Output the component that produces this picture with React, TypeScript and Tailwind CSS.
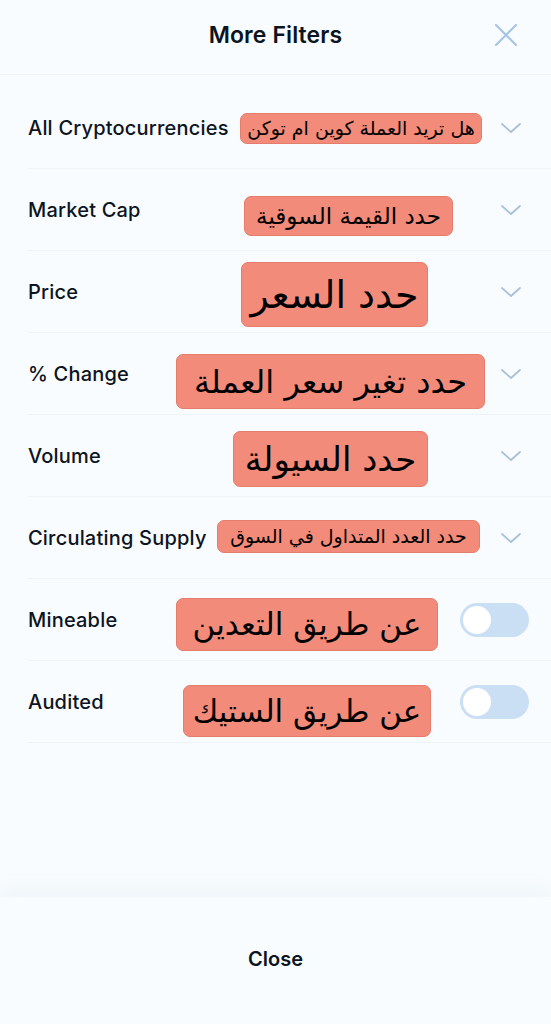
import React from "react";

type Row = {
  label: string;
  note: string;
  noteClass: string;
  toggle?: boolean;
};

const rows: Row[] = [
  {
    label: "All Cryptocurrencies",
    note: "هل تريد العملة كوين ام توكن",
    noteClass: "left-[212px] top-[26px] w-[242px] h-[31px] text-[19px]",
  },
  {
    label: "Market Cap",
    note: "حدد القيمة السوقية",
    noteClass: "left-[216px] top-[27px] w-[209px] h-[40px] text-[23px]",
  },
  {
    label: "Price",
    note: "حدد السعر",
    noteClass: "left-[213px] top-[11px] w-[187px] h-[65px] text-[38px]",
  },
  {
    label: "% Change",
    note: "حدد تغير سعر العملة",
    noteClass: "left-[148px] top-[21px] w-[309px] h-[55px] text-[32px]",
  },
  {
    label: "Volume",
    note: "حدد السيولة",
    noteClass: "left-[205px] top-[16px] w-[195px] h-[56px] text-[34px]",
  },
  {
    label: "Circulating Supply",
    note: "حدد العدد المتداول في السوق",
    noteClass: "left-[189px] top-[23px] w-[263px] h-[33px] text-[19px]",
  },
  {
    label: "Mineable",
    note: "عن طريق التعدين",
    noteClass: "left-[148px] top-[19px] w-[262px] h-[53px] text-[31px]",
    toggle: true,
  },
  {
    label: "Audited",
    note: "عن طريق الستيك",
    noteClass: "left-[155px] top-[24px] w-[248px] h-[52px] text-[31px]",
    toggle: true,
  },
];

function Chevron() {
  return (
    <svg width="22" height="12" viewBox="0 0 22 12" fill="none" className="mr-[7px]">
      <path
        d="M2 2l9 8 9-8"
        stroke="#a9c0d8"
        strokeWidth="1.8"
        strokeLinecap="round"
        strokeLinejoin="round"
      />
    </svg>
  );
}

function Toggle() {
  return (
    <div className="flex h-[34px] w-[69px] items-center rounded-full bg-[#cadff3] px-[3px]">
      <div className="h-[28px] w-[28px] rounded-full bg-white" />
    </div>
  );
}

export default function App() {
  return (
    <div
      className="flex h-[1024px] w-full flex-col bg-[#f8fcfe] text-[#0d1421]"
      style={{ fontFamily: "Inter, 'Noto Sans', sans-serif" }}
    >
      {/* Header */}
      <div className="grid h-[75px] grid-cols-[1fr_auto_1fr] items-center border-b border-[#eef4f7] pb-1">
        <div />
        <h1 className="text-[23px] font-semibold tracking-[0.1px]">More Filters</h1>
        <div className="flex justify-end pr-[33px]">
          <svg width="24" height="24" viewBox="0 0 24 24" fill="none">
            <path
              d="M2 2l20 20M22 2L2 22"
              stroke="#a7c4e4"
              strokeWidth="2.2"
              strokeLinecap="round"
            />
          </svg>
        </div>
      </div>

      {/* Filter list */}
      <div className="flex-1 pt-3">
        {rows.map((row) => (
          <div
            key={row.label}
            className="relative ml-7 flex h-[82px] items-center justify-between border-b border-[#eef3f6] pr-[22px]"
          >
            <span className="text-[20px] font-medium tracking-[0.2px]">{row.label}</span>
            {row.toggle ? <Toggle /> : <Chevron />}
            <div
              dir="rtl"
              className={`absolute flex items-center justify-center overflow-visible whitespace-nowrap rounded-[7px] border border-[#e57d6c] bg-[#f28b79] leading-none text-black ${row.noteClass}`}
              style={{ fontFamily: "'DejaVu Sans', sans-serif" }}
            >
              {row.note}
            </div>
          </div>
        ))}
      </div>

      {/* Footer */}
      <div className="flex h-[127px] items-center justify-center bg-[#f8fcfe] pb-1 shadow-[0_-8px_14px_rgba(200,215,230,0.18)]">
        <button className="text-[20px] font-semibold">Close</button>
      </div>
    </div>
  );
}
